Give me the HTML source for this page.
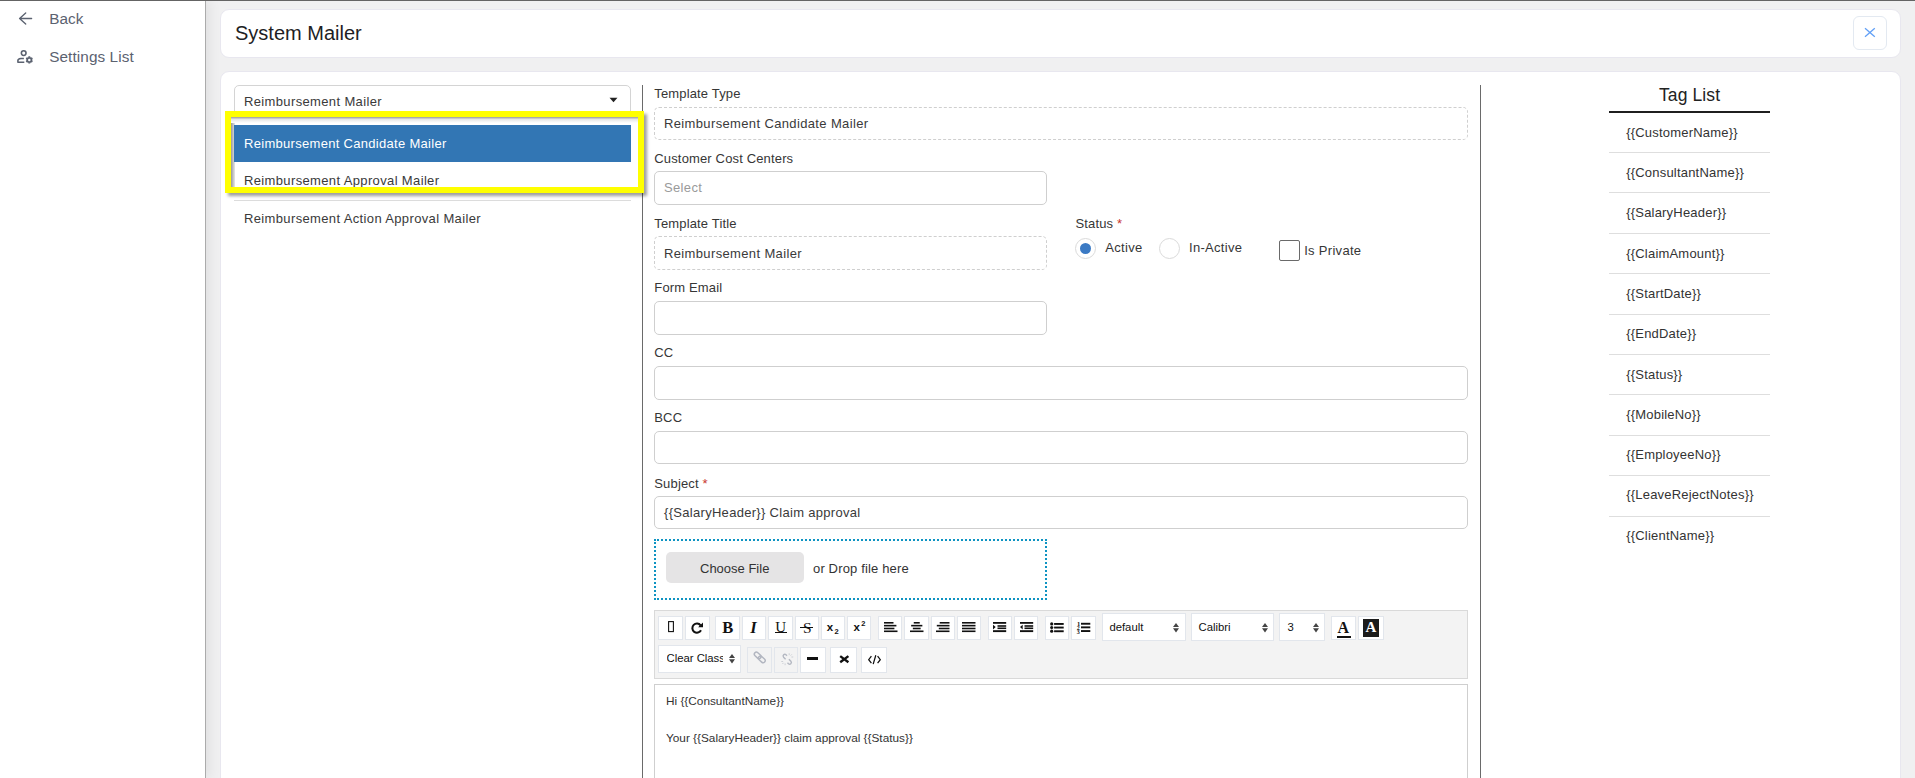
<!DOCTYPE html>
<html><head><meta charset="utf-8"><title>System Mailer</title>
<style>
html,body{margin:0;padding:0;width:1915px;height:778px;overflow:hidden;background:#efefef;font-family:"Liberation Sans",sans-serif}
.r{position:absolute}
.t{position:absolute;white-space:nowrap}
.btn{border:1px solid #e2e6ec;box-sizing:border-box}
</style></head><body>
<div class="r" style="left:0px;top:0px;width:1915px;height:778px;background:#f0f0f1"></div>
<div class="r" style="left:0px;top:0px;width:206px;height:778px;background:#fff;border-right:1px solid #ababab;box-sizing:border-box;box-shadow:3px 0 12px rgba(0,0,0,0.075)"></div>
<div class="r" style="left:0px;top:0px;width:1915px;height:1px;background:#646464;z-index:5"></div>
<svg class="r" style="left:17px;top:10px" width="18" height="18" viewBox="0 0 18 18"><path d="M14.6 8.5H2.6M8.7 3L2.6 8.5l6.1 5.6" fill="none" stroke="#5b6270" stroke-width="1.35" stroke-linecap="round" stroke-linejoin="round"/></svg>
<div class="t" style="left:49.2px;top:11.35px;font-size:15.3px;line-height:15.3px;color:#5b6270;font-weight:normal;letter-spacing:0.1px;">Back</div>
<svg class="r" style="left:16px;top:48px" width="19" height="18" viewBox="0 0 19 18"><circle cx="7.7" cy="5.1" r="2.35" fill="none" stroke="#5b6270" stroke-width="1.55"/><path d="M7.9 10.4H4.8C3 10.6 1.9 11.5 1.9 12.6V14.3H8.3" fill="none" stroke="#5b6270" stroke-width="1.55" stroke-linejoin="round"/><circle cx="13.3" cy="11.9" r="2.1" fill="none" stroke="#5b6270" stroke-width="1.7"/><path d="M13.30 9.50L13.30 8.30M11.22 10.70L10.18 10.10M11.22 13.10L10.18 13.70M13.30 14.30L13.30 15.50M15.38 13.10L16.42 13.70M15.38 10.70L16.42 10.10" stroke="#5b6270" stroke-width="1.9" stroke-linecap="butt"/></svg>
<div class="t" style="left:49.2px;top:49.25px;font-size:15.3px;line-height:15.3px;color:#5b6270;font-weight:normal;letter-spacing:0.1px;">Settings List</div>
<div class="r" style="left:220px;top:9px;width:1681px;height:49px;background:#fff;border:1px solid #e8e7ef;border-radius:9px;box-sizing:border-box"></div>
<div class="t" style="left:235px;top:22.77px;font-size:20px;line-height:20px;color:#1e1e24;font-weight:normal;letter-spacing:0px;">System Mailer</div>
<div class="r" style="left:1853px;top:16px;width:34px;height:34px;border:1px solid #e3e9f1;border-radius:6px;box-sizing:border-box;background:#fff"></div>
<svg class="r" style="left:1864px;top:27px" width="12" height="11" viewBox="0 0 12 11"><path d="M1 1.2L10.8 9.8M10.8 1.2L1 9.8" stroke="#62a0f6" stroke-width="1.3"/></svg>
<div class="r" style="left:220px;top:71px;width:1681px;height:729px;background:#fff;border:1px solid #e8e7ef;border-radius:9px;box-sizing:border-box"></div>
<div class="r" style="left:234px;top:85px;width:397px;height:40px;border:1px solid #d4d4d4;border-radius:5px;box-sizing:border-box;background:#fff"></div>
<div class="t" style="left:244px;top:95.30px;font-size:13px;line-height:13px;color:#3a3a3a;font-weight:normal;letter-spacing:0.36px;">Reimbursement Mailer</div>
<svg class="r" style="left:609px;top:97px" width="9" height="6" viewBox="0 0 9 6"><path d="M0.5 0.8h8L4.5 5.2z" fill="#222"/></svg>
<div class="r" style="left:234px;top:200px;width:397px;height:1px;background:#dcdcdc"></div>
<div class="t" style="left:244px;top:211.60px;font-size:13px;line-height:13px;color:#3a3a3a;font-weight:normal;letter-spacing:0.36px;">Reimbursement Action Approval Mailer</div>
<div class="r" style="left:225px;top:111px;width:419px;height:82px;box-sizing:border-box;border:6px solid #ffff00;background:#fff;box-shadow:3px 3px 3px rgba(0,0,0,0.38);overflow:hidden;z-index:3"><div class="r" style="left:0;top:0;width:4px;height:100%;background:linear-gradient(90deg,#9a9a9a,#e8e8e8)"></div><div class="r" style="left:0;top:0;width:100%;height:6px;background:linear-gradient(180deg,#9a9a9a,#e6e6e6 40%,#fff)"></div><div class="r" style="left:3px;top:8px;width:397px;height:37px;background:#3276b4"></div></div>
<div class="t" style="left:244px;top:136.90px;font-size:13px;line-height:13px;color:#fff;font-weight:normal;letter-spacing:0.3px;z-index:4;">Reimbursement Candidate Mailer</div>
<div class="r" style="left:231px;top:117px;width:407px;height:70px;overflow:hidden;z-index:4">
<div class="t" style="left:13px;top:57.40px;font-size:13px;line-height:13px;color:#3a3a3a;font-weight:normal;letter-spacing:0.36px;">Reimbursement Approval Mailer</div>
</div>
<div class="r" style="left:642px;top:85px;width:1px;height:715px;background:#6a6a6a"></div>
<div class="r" style="left:1480px;top:85px;width:1px;height:715px;background:#6a6a6a"></div>
<div class="t" style="left:654.3px;top:86.60px;font-size:13px;line-height:13px;color:#363636;font-weight:normal;letter-spacing:0.15px;">Template Type</div>
<div class="r" style="left:654px;top:107px;width:814px;height:33px;border:1px dashed #cfcfcf;border-radius:5px;box-sizing:border-box;background:#fff"></div>
<div class="t" style="left:664px;top:116.80px;font-size:13px;line-height:13px;color:#3a3a3a;font-weight:normal;letter-spacing:0.36px;">Reimbursement Candidate Mailer</div>
<div class="t" style="left:654.3px;top:151.90px;font-size:13px;line-height:13px;color:#363636;font-weight:normal;letter-spacing:0.15px;">Customer Cost Centers</div>
<div class="r" style="left:654px;top:171px;width:393px;height:34px;border:1px solid #cfcfcf;border-radius:5px;box-sizing:border-box;background:#fff"></div>
<div class="t" style="left:664px;top:180.80px;font-size:13px;line-height:13px;color:#9a9a9a;font-weight:normal;letter-spacing:0.36px;">Select</div>
<div class="t" style="left:654.3px;top:216.80px;font-size:13px;line-height:13px;color:#363636;font-weight:normal;letter-spacing:0.15px;">Template Title</div>
<div class="r" style="left:654px;top:236px;width:393px;height:34px;border:1px dashed #cfcfcf;border-radius:5px;box-sizing:border-box;background:#fff"></div>
<div class="t" style="left:664px;top:246.60px;font-size:13px;line-height:13px;color:#3a3a3a;font-weight:normal;letter-spacing:0.36px;">Reimbursement Mailer</div>
<div class="t" style="left:654.3px;top:281.40px;font-size:13px;line-height:13px;color:#363636;font-weight:normal;letter-spacing:0.15px;">Form Email</div>
<div class="r" style="left:654px;top:301px;width:393px;height:34px;border:1px solid #cfcfcf;border-radius:5px;box-sizing:border-box;background:#fff"></div>
<div class="t" style="left:654.3px;top:346.00px;font-size:13px;line-height:13px;color:#363636;font-weight:normal;letter-spacing:0.15px;">CC</div>
<div class="r" style="left:654px;top:366px;width:814px;height:34px;border:1px solid #cfcfcf;border-radius:5px;box-sizing:border-box;background:#fff"></div>
<div class="t" style="left:654.3px;top:411.00px;font-size:13px;line-height:13px;color:#363636;font-weight:normal;letter-spacing:0.15px;">BCC</div>
<div class="r" style="left:654px;top:431px;width:814px;height:33px;border:1px solid #cfcfcf;border-radius:5px;box-sizing:border-box;background:#fff"></div>
<div class="t" style="left:654.3px;top:476.60px;font-size:13px;line-height:13px;color:#363636;font-weight:normal;letter-spacing:0.15px;">Subject <span style="color:#c8362e">*</span></div>
<div class="r" style="left:654px;top:496px;width:814px;height:33px;border:1px solid #cfcfcf;border-radius:5px;box-sizing:border-box;background:#fff"></div>
<div class="t" style="left:664px;top:506.00px;font-size:13px;line-height:13px;color:#3a3a3a;font-weight:normal;letter-spacing:0.3px;">{{SalaryHeader}} Claim approval</div>
<div class="t" style="left:1075.5px;top:217.30px;font-size:13px;line-height:13px;color:#363636;font-weight:normal;letter-spacing:0.15px;">Status <span style="color:#c8362e">*</span></div>
<div class="r" style="left:1075px;top:238px;width:21px;height:21px;border:1px solid #dadada;border-radius:50%;box-sizing:border-box;background:#fff"></div>
<div class="r" style="left:1080px;top:243px;width:11px;height:11px;border-radius:50%;background:#3b7ac4"></div>
<div class="t" style="left:1105.3px;top:241.10px;font-size:13px;line-height:13px;color:#363636;font-weight:normal;letter-spacing:0.3px;">Active</div>
<div class="r" style="left:1159px;top:238px;width:21px;height:21px;border:1px solid #dadada;border-radius:50%;box-sizing:border-box;background:#fff"></div>
<div class="t" style="left:1189px;top:241.10px;font-size:13px;line-height:13px;color:#363636;font-weight:normal;letter-spacing:0.3px;">In-Active</div>
<div class="r" style="left:1279px;top:240px;width:21px;height:21px;border:1px solid #6a6a6a;border-radius:2px;box-sizing:border-box;background:#fff"></div>
<div class="t" style="left:1304.2px;top:244.20px;font-size:13px;line-height:13px;color:#363636;font-weight:normal;letter-spacing:0.3px;">Is Private</div>
<div class="r" style="left:654px;top:539px;width:393px;height:61px;border:2px dotted #0e93c2;box-sizing:border-box"></div>
<div class="r" style="left:666px;top:552px;width:138px;height:31px;background:#e5e4e5;border-radius:5px"></div>
<div class="t" style="left:700px;top:561.50px;font-size:13px;line-height:13px;color:#333;font-weight:normal;letter-spacing:0px;">Choose File</div>
<div class="t" style="left:813px;top:561.50px;font-size:13px;line-height:13px;color:#333;font-weight:normal;letter-spacing:0.15px;">or Drop file here</div>
<div class="r" style="left:654px;top:610px;width:814px;height:69px;background:#f3f3f3;border:1px solid #d9d9d9;box-sizing:border-box"></div>
<div class="r btn" style="left:658.3px;top:615.5px;width:25.0px;height:24.799999999999955px;background:#fff"></div>
<div class="r btn" style="left:684.5px;top:615.5px;width:25.0px;height:24.799999999999955px;background:#fff"></div>
<div class="r btn" style="left:715.3px;top:615.5px;width:25.0px;height:24.799999999999955px;background:#fff"></div>
<div class="r btn" style="left:741.8px;top:615.5px;width:24.200000000000045px;height:24.799999999999955px;background:#fff"></div>
<div class="r btn" style="left:767.5px;top:615.5px;width:25.700000000000045px;height:24.799999999999955px;background:#fff"></div>
<div class="r btn" style="left:794.6px;top:615.5px;width:24.600000000000023px;height:24.799999999999955px;background:#fff"></div>
<div class="r btn" style="left:820.6px;top:615.5px;width:24.600000000000023px;height:24.799999999999955px;background:#fff"></div>
<div class="r btn" style="left:846.6px;top:615.5px;width:24.699999999999932px;height:24.799999999999955px;background:#fff"></div>
<div class="r btn" style="left:877.6px;top:615.5px;width:24.600000000000023px;height:24.799999999999955px;background:#fff"></div>
<div class="r btn" style="left:903.7px;top:615.5px;width:25.299999999999955px;height:24.799999999999955px;background:#fff"></div>
<div class="r btn" style="left:930.6px;top:615.5px;width:24.600000000000023px;height:24.799999999999955px;background:#fff"></div>
<div class="r btn" style="left:956.7px;top:615.5px;width:24.59999999999991px;height:24.799999999999955px;background:#fff"></div>
<div class="r btn" style="left:987.5px;top:615.5px;width:24.799999999999955px;height:24.799999999999955px;background:#fff"></div>
<div class="r btn" style="left:1013.7px;top:615.5px;width:24.59999999999991px;height:24.799999999999955px;background:#fff"></div>
<div class="r btn" style="left:1044.5px;top:615.5px;width:24.59999999999991px;height:24.799999999999955px;background:#fff"></div>
<div class="r btn" style="left:1070.6px;top:615.5px;width:25.800000000000182px;height:24.799999999999955px;background:#fff"></div>
<div class="r btn" style="left:1331.4px;top:615.5px;width:24.699999999999818px;height:24.799999999999955px;background:#fff"></div>
<div class="r btn" style="left:1357.6px;top:615.5px;width:26.700000000000045px;height:24.799999999999955px;background:#fff"></div>
<svg class="r" style="left:668px;top:620.8px;overflow:visible" width="6" height="11.2" viewBox="0 0 6 11.2"><rect x="0.6" y="0.6" width="4.8" height="10" fill="none" stroke="#111" stroke-width="1.1"/></svg>
<svg class="r" style="left:691px;top:621.8px;overflow:visible" width="12.5" height="11.5" viewBox="0 0 12.5 11.5"><path d="M9.6 3.3A4.6 4.6 0 1 0 10 8.3" fill="none" stroke="#111" stroke-width="2.1"/><path d="M12 0.4v4.9H7.1z" fill="#111"/></svg>
<div class="t" style="left:722.3px;top:619.98px;font:normal bold 16.5px/16.5px 'Liberation Serif',serif;color:#111;">B</div>
<div class="t" style="left:750.3px;top:619.98px;font:italic bold 16.5px/16.5px 'Liberation Serif',serif;color:#111;">I</div>
<div class="t" style="left:775.3px;top:620.04px;font:normal normal 15px/15px 'Liberation Serif',serif;color:#111;">U</div>
<div class="r" style="left:775px;top:632px;width:12px;height:1.2999999999999545px;background:#111"></div>
<div class="t" style="left:803px;top:620.02px;font:normal normal 15.5px/15.5px 'Liberation Serif',serif;color:#111;">S</div>
<div class="r" style="left:800.4px;top:627px;width:13.0px;height:1.2999999999999545px;background:#111"></div>
<div class="t" style="left:826.8px;top:622.17px;font:bold 11.5px/11.5px 'Liberation Sans',sans-serif;color:#111;">x</div>
<div class="t" style="left:834.4px;top:627.65px;font:bold 7.5px/7.5px 'Liberation Sans',sans-serif;color:#111;">2</div>
<div class="t" style="left:853.4px;top:622.17px;font:bold 11.5px/11.5px 'Liberation Sans',sans-serif;color:#111;">x</div>
<div class="t" style="left:861.2px;top:620.25px;font:bold 7.5px/7.5px 'Liberation Sans',sans-serif;color:#111;">2</div>
<svg class="r" style="left:883.6px;top:621.9px;overflow:visible" width="13.5" height="10.2" viewBox="0 0 13.5 10.2"><rect x="0" y="0" width="9.5" height="1.6" fill="#111"/><rect x="0" y="2.85" width="12.4" height="1.6" fill="#111"/><rect x="0" y="5.7" width="10.4" height="1.6" fill="#111"/><rect x="0" y="8.5" width="13.5" height="1.6" fill="#111"/></svg>
<svg class="r" style="left:909.8px;top:621.9px;overflow:visible" width="13.5" height="10.2" viewBox="0 0 13.5 10.2"><rect x="3.75" y="0" width="6" height="1.6" fill="#111"/><rect x="1.1500000000000004" y="2.85" width="11.2" height="1.6" fill="#111"/><rect x="2.85" y="5.7" width="7.8" height="1.6" fill="#111"/><rect x="0.0" y="8.5" width="13.5" height="1.6" fill="#111"/></svg>
<svg class="r" style="left:936.2px;top:621.9px;overflow:visible" width="13.5" height="10.2" viewBox="0 0 13.5 10.2"><rect x="3.6999999999999993" y="0" width="9.8" height="1.6" fill="#111"/><rect x="0.8000000000000007" y="2.85" width="12.7" height="1.6" fill="#111"/><rect x="2.8000000000000007" y="5.7" width="10.7" height="1.6" fill="#111"/><rect x="0.0" y="8.5" width="13.5" height="1.6" fill="#111"/></svg>
<svg class="r" style="left:962.4px;top:621.9px;overflow:visible" width="13.5" height="10.2" viewBox="0 0 13.5 10.2"><rect x="0" y="0" width="13.5" height="1.6" fill="#111"/><rect x="0" y="2.85" width="13.5" height="1.6" fill="#111"/><rect x="0" y="5.7" width="13.5" height="1.6" fill="#111"/><rect x="0" y="8.5" width="13.5" height="1.6" fill="#111"/></svg>
<svg class="r" style="left:993.4px;top:621.9px;overflow:visible" width="13.2" height="10.2" viewBox="0 0 13.2 10.2"><rect x="0" y="0" width="13.2" height="1.8" fill="#111"/><rect x="4.5" y="3.2" width="8.7" height="1.6" fill="#111"/><rect x="4.5" y="5.5" width="8.7" height="1.6" fill="#111"/><rect x="0" y="8.2" width="13.2" height="1.9" fill="#111"/><path d="M0 2.7l2.7 2.4L0 7.5z" fill="#111"/></svg>
<svg class="r" style="left:1019.9px;top:621.9px;overflow:visible" width="13.2" height="10.2" viewBox="0 0 13.2 10.2"><rect x="0" y="0" width="13.2" height="1.8" fill="#111"/><rect x="4.5" y="3.2" width="8.7" height="1.6" fill="#111"/><rect x="4.5" y="5.5" width="8.7" height="1.6" fill="#111"/><rect x="0" y="8.2" width="13.2" height="1.9" fill="#111"/><path d="M2.7 2.7L0 5.1l2.7 2.4z" fill="#111"/></svg>
<svg class="r" style="left:1050px;top:621.8px;overflow:visible" width="14" height="10.5" viewBox="0 0 14 10.5"><circle cx="1.7" cy="1.9" r="1.6" fill="#111"/><circle cx="1.7" cy="5.5" r="1.6" fill="#111"/><circle cx="1.7" cy="9.2" r="1.6" fill="#111"/><rect x="4.1" y="1" width="9.6" height="1.9" fill="#111"/><rect x="4.1" y="4.6" width="9.6" height="1.9" fill="#111"/><rect x="4.1" y="8.3" width="9.6" height="1.9" fill="#111"/></svg>
<svg class="r" style="left:1076.5px;top:621px;overflow:visible" width="14" height="13" viewBox="0 0 14 13"><text x="0" y="5" font-size="6.5" font-weight="bold" font-family="Liberation Serif" fill="#111">1</text><text x="-0.2" y="9" font-size="6" font-weight="bold" font-family="Liberation Serif" fill="#111">2</text><text x="-0.2" y="13" font-size="6" font-weight="bold" font-family="Liberation Serif" fill="#111">3</text><rect x="4" y="1.8" width="9.3" height="1.9" fill="#111"/><rect x="4" y="5.4" width="9.3" height="1.9" fill="#111"/><rect x="4" y="9.1" width="9.3" height="1.9" fill="#111"/></svg>
<div class="r btn" style="left:1101.5px;top:613.2px;width:84.09999999999991px;height:27.399999999999977px;background:#fff"></div>
<div class="t" style="left:1109.4px;top:622.23px;font:normal 11.3px/11.3px 'Liberation Sans',sans-serif;color:#111;">default</div>
<svg class="r" style="left:1173.3px;top:622.6px;overflow:visible" width="6" height="9.4" viewBox="0 0 6 9.4"><path d="M3 0L6 4.1H0z M3 9.4L6 5.3H0z" fill="#444"/></svg>
<div class="r btn" style="left:1190.5px;top:613.2px;width:83.90000000000009px;height:27.399999999999977px;background:#fff"></div>
<div class="t" style="left:1198.6px;top:622.23px;font:normal 11.3px/11.3px 'Liberation Sans',sans-serif;color:#111;">Calibri</div>
<svg class="r" style="left:1262.4px;top:622.6px;overflow:visible" width="6" height="9.4" viewBox="0 0 6 9.4"><path d="M3 0L6 4.1H0z M3 9.4L6 5.3H0z" fill="#444"/></svg>
<div class="r btn" style="left:1279.4px;top:613.2px;width:46.0px;height:27.399999999999977px;background:#fff"></div>
<div class="t" style="left:1287.4px;top:622.23px;font:normal 11.3px/11.3px 'Liberation Sans',sans-serif;color:#111;">3</div>
<svg class="r" style="left:1313.3px;top:622.6px;overflow:visible" width="6" height="9.4" viewBox="0 0 6 9.4"><path d="M3 0L6 4.1H0z M3 9.4L6 5.3H0z" fill="#444"/></svg>
<div class="t" style="left:1337.6px;top:619.50px;font:normal bold 16px/16px 'Liberation Serif',serif;color:#111;">A</div>
<div class="r" style="left:1337.2px;top:636px;width:13.799999999999955px;height:2px;background:#111"></div>
<div class="r" style="left:1363px;top:619px;width:16px;height:17.799999999999955px;background:#1b1b1b"></div>
<div class="t" style="left:1365.5px;top:620.44px;font:normal bold 15px/15px 'Liberation Serif',serif;color:#fff;">A</div>
<div class="r btn" style="left:658.4px;top:645.2px;width:83.0px;height:27.399999999999977px;background:#fff"></div>
<div class="r" style="left:666.5px;top:645.2px;width:56.10000000000002px;height:27.399999999999977px;overflow:hidden">
<div class="t" style="left:0;top:7.43px;font:11.3px/11.3px 'Liberation Sans',sans-serif;color:#111">Clear Class</div></div>
<svg class="r" style="left:729.4px;top:653.7px;overflow:visible" width="6" height="9.4" viewBox="0 0 6 9.4"><path d="M3 0L6 4.1H0z M3 9.4L6 5.3H0z" fill="#444"/></svg>
<div class="r btn" style="left:747.2px;top:646.5px;width:25.0px;height:26.100000000000023px;background:#f3f3f3"></div>
<div class="r btn" style="left:773.7px;top:646.5px;width:24.399999999999977px;height:26.100000000000023px;background:#f3f3f3"></div>
<div class="r btn" style="left:799.8px;top:646.5px;width:25.90000000000009px;height:26.100000000000023px;background:#fff"></div>
<div class="r btn" style="left:830.3px;top:646.5px;width:26.40000000000009px;height:26.100000000000023px;background:#fff"></div>
<div class="r btn" style="left:861.3px;top:646.5px;width:25.800000000000068px;height:26.100000000000023px;background:#fff"></div>
<svg class="r" style="left:753.3px;top:651.3px;overflow:visible" width="13.5" height="13" viewBox="0 0 13.5 13"><g fill="none" stroke="#b2b6c0" stroke-width="1.45"><rect x="0.9" y="2.3" width="7.6" height="4.2" rx="2.1" transform="rotate(42 4.7 4.4)"/><rect x="5" y="6.3" width="7.6" height="4.2" rx="2.1" transform="rotate(42 8.8 8.4)"/></g></svg>
<svg class="r" style="left:780.5px;top:652.8px;overflow:visible" width="12.5" height="12.5" viewBox="0 0 12.5 12.5"><g fill="none" stroke="#b4b8c2" stroke-width="1.4"><path d="M4.6 6.2L2.6 4.2a1.7 1.7 0 0 1 2.4-2.4l1 1"/><path d="M7.9 6.3l2 2a1.7 1.7 0 0 1-2.4 2.4l-1-1"/></g><g stroke="#c2c5cd" stroke-width="0.8"><path d="M8.2 0.3v1.8M10.8 1.4l-1.2 1.2M12.2 4h-1.8M0.3 8.5h1.8M1.4 11l1.2-1.2M4.1 12.2v-1.8"/></g></svg>
<div class="r" style="left:807.3px;top:656.6px;width:10.300000000000068px;height:3.0px;background:#111"></div>
<svg class="r" style="left:838.8px;top:655.3px;overflow:visible" width="10.6" height="8.3" viewBox="0 0 10.6 8.3"><path d="M1.2 1.1l8.2 6.1M9.4 1.1L1.2 7.2" stroke="#111" stroke-width="2.4"/></svg>
<svg class="r" style="left:867.6px;top:654.6px;overflow:visible" width="13" height="9.4" viewBox="0 0 13 9.4"><path d="M3.4 1.2L0.7 4.7l2.7 3.5M9.6 1.2l2.7 3.5-2.7 3.5M7.8 0.3L5.2 9.1" fill="none" stroke="#111" stroke-width="1.25"/></svg>
<div class="r" style="left:654px;top:684px;width:814px;height:116px;background:#fff;border:1px solid #cfcfcf;box-sizing:border-box"></div>
<div class="t" style="left:666px;top:696.21px;font-size:11.8px;line-height:11.8px;color:#333;font-weight:normal;letter-spacing:0px;">Hi {{ConsultantName}}</div>
<div class="t" style="left:666px;top:733.21px;font-size:11.8px;line-height:11.8px;color:#333;font-weight:normal;letter-spacing:0px;">Your {{SalaryHeader}} claim approval {{Status}}</div>
<div class="t" style="left:1659px;top:86.59px;font-size:17.5px;line-height:17.5px;color:#222;font-weight:normal;letter-spacing:0.1px;">Tag List</div>
<div class="r" style="left:1609px;top:111px;width:161px;height:2px;background:#1f1f1f"></div>
<div class="t" style="left:1626.2px;top:125.60px;font-size:13px;line-height:13px;color:#333;font-weight:normal;letter-spacing:0.2px;">{{CustomerName}}</div>
<div class="r" style="left:1609px;top:152px;width:161px;height:1px;background:#dedede"></div>
<div class="t" style="left:1626.2px;top:165.92px;font-size:13px;line-height:13px;color:#333;font-weight:normal;letter-spacing:0.2px;">{{ConsultantName}}</div>
<div class="r" style="left:1609px;top:192px;width:161px;height:1px;background:#dedede"></div>
<div class="t" style="left:1626.2px;top:206.24px;font-size:13px;line-height:13px;color:#333;font-weight:normal;letter-spacing:0.2px;">{{SalaryHeader}}</div>
<div class="r" style="left:1609px;top:233px;width:161px;height:1px;background:#dedede"></div>
<div class="t" style="left:1626.2px;top:246.56px;font-size:13px;line-height:13px;color:#333;font-weight:normal;letter-spacing:0.2px;">{{ClaimAmount}}</div>
<div class="r" style="left:1609px;top:273px;width:161px;height:1px;background:#dedede"></div>
<div class="t" style="left:1626.2px;top:286.88px;font-size:13px;line-height:13px;color:#333;font-weight:normal;letter-spacing:0.2px;">{{StartDate}}</div>
<div class="r" style="left:1609px;top:314px;width:161px;height:1px;background:#dedede"></div>
<div class="t" style="left:1626.2px;top:327.20px;font-size:13px;line-height:13px;color:#333;font-weight:normal;letter-spacing:0.2px;">{{EndDate}}</div>
<div class="r" style="left:1609px;top:354px;width:161px;height:1px;background:#dedede"></div>
<div class="t" style="left:1626.2px;top:367.52px;font-size:13px;line-height:13px;color:#333;font-weight:normal;letter-spacing:0.2px;">{{Status}}</div>
<div class="r" style="left:1609px;top:394px;width:161px;height:1px;background:#dedede"></div>
<div class="t" style="left:1626.2px;top:407.84px;font-size:13px;line-height:13px;color:#333;font-weight:normal;letter-spacing:0.2px;">{{MobileNo}}</div>
<div class="r" style="left:1609px;top:435px;width:161px;height:1px;background:#dedede"></div>
<div class="t" style="left:1626.2px;top:448.16px;font-size:13px;line-height:13px;color:#333;font-weight:normal;letter-spacing:0.2px;">{{EmployeeNo}}</div>
<div class="r" style="left:1609px;top:475px;width:161px;height:1px;background:#dedede"></div>
<div class="t" style="left:1626.2px;top:488.48px;font-size:13px;line-height:13px;color:#333;font-weight:normal;letter-spacing:0.2px;">{{LeaveRejectNotes}}</div>
<div class="r" style="left:1609px;top:516px;width:161px;height:1px;background:#dedede"></div>
<div class="t" style="left:1626.2px;top:528.80px;font-size:13px;line-height:13px;color:#333;font-weight:normal;letter-spacing:0.2px;">{{ClientName}}</div>
</body></html>
